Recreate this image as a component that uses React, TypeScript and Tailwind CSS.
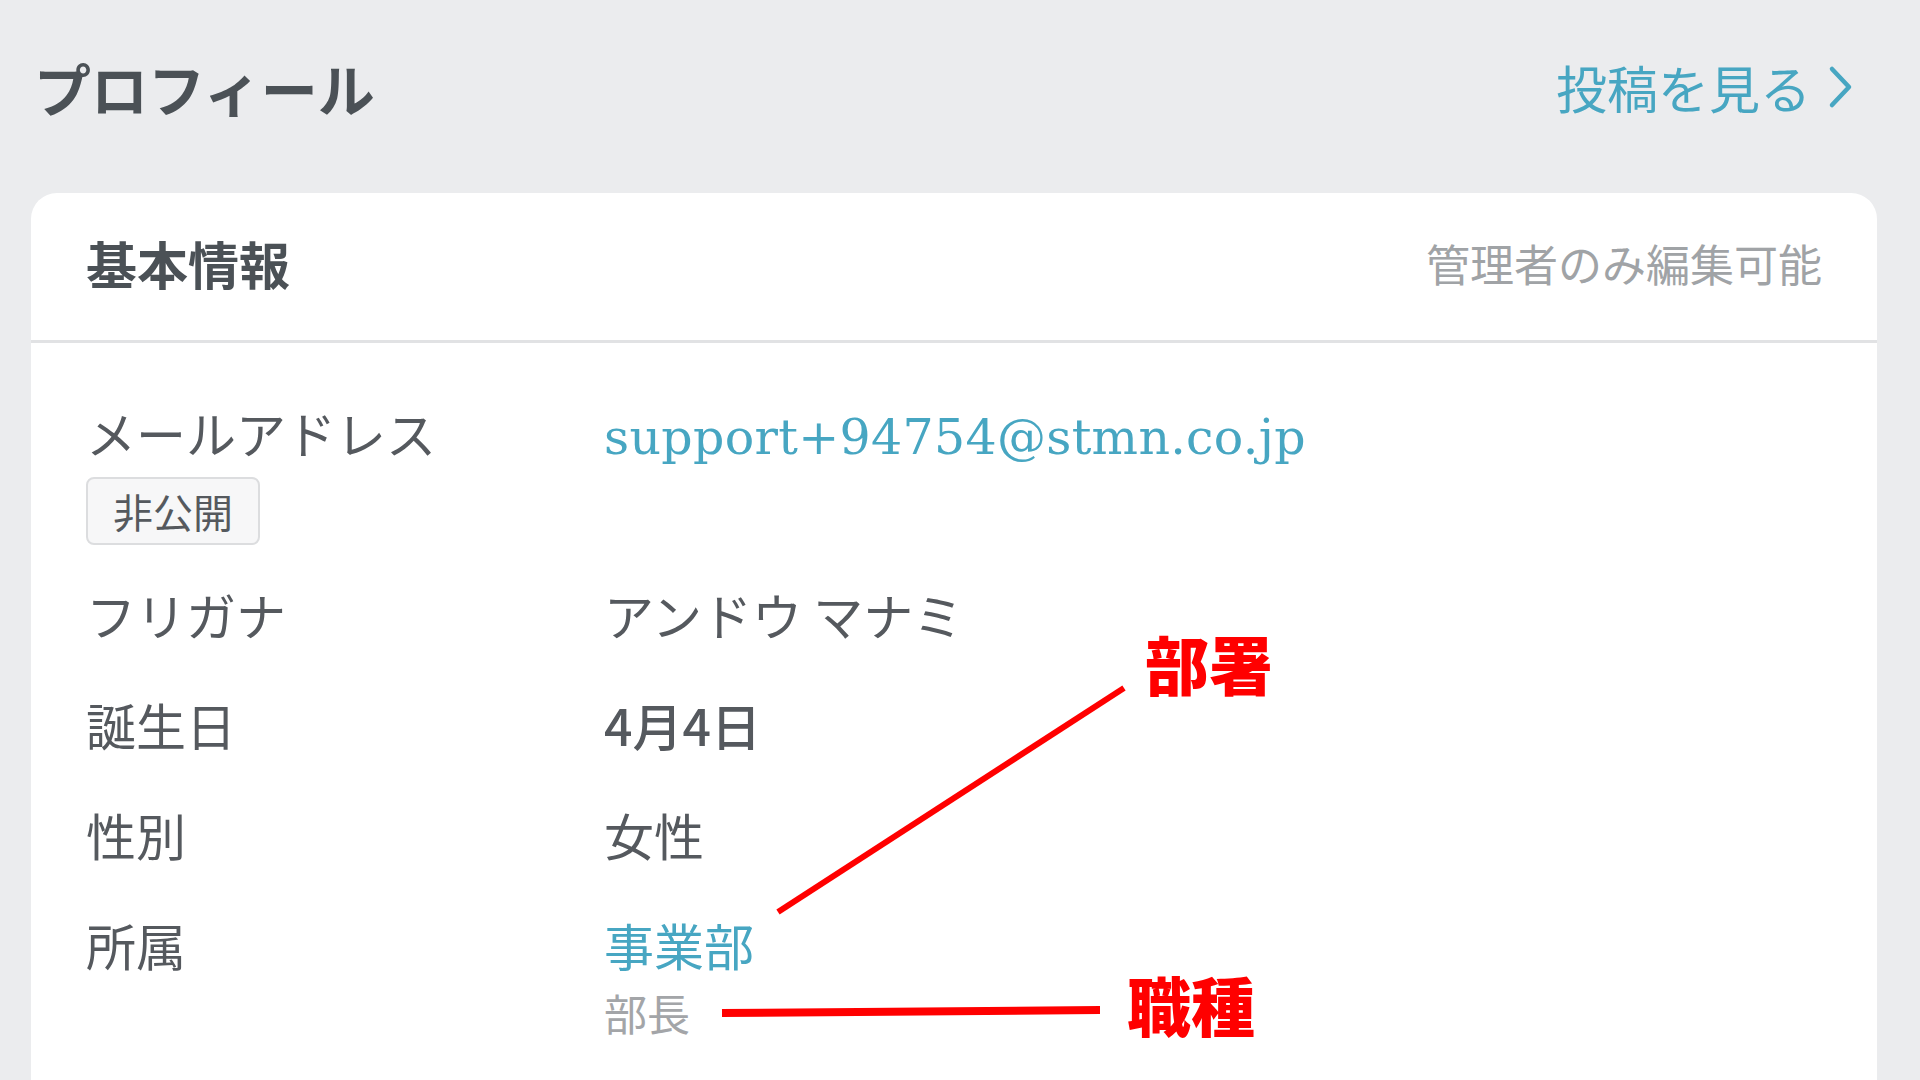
import { ReactNode } from "react";

const JP = "font-['Noto_Sans_CJK_JP','Noto_Sans',sans-serif]";

type Row = {
  label: string;
  badge?: string;
  value: ReactNode;
};

const ROWS: Row[] = [
  {
    label: "メールアドレス",
    badge: "非公開",
    value: (
      <span className="font-['DejaVu_Serif',serif] text-[49px] leading-[72px] tracking-[0.3px] text-[#47a6c2]">
        support+94754@stmn.co.jp
      </span>
    ),
  },
  { label: "フリガナ", value: <span>アンドウ マナミ</span> },
  { label: "誕生日", value: <span className="font-medium">4月4日</span> },
  { label: "性別", value: <span>女性</span> },
  {
    label: "所属",
    value: (
      <div className="flex flex-col">
        <span className="text-[#47a6c2]">事業部</span>
        <span className="text-[43px] leading-[64px] text-[#a3a5a8]">部長</span>
      </div>
    ),
  },
];

function Chevron() {
  return (
    <svg width="30" height="46" viewBox="0 0 30 46" fill="none" className="ml-[14px]">
      <polyline
        points="7,5 24,23 7,41"
        stroke="#47a6c2"
        strokeWidth="4.5"
        strokeLinecap="round"
        strokeLinejoin="round"
      />
    </svg>
  );
}

export default function App() {
  return (
    <div className={"relative h-[1080px] w-[1920px] overflow-hidden bg-[#ebecee] " + JP}>
      <header className="flex h-[184px] items-center justify-between pb-[10px] pl-[34px] pr-[65px]">
        <h1 className="text-[57px] font-bold leading-none text-[#4b5156]">プロフィール</h1>
        <a className="flex items-center text-[51px] leading-none text-[#47a6c2]">
          投稿を見る
          <Chevron />
        </a>
      </header>

      <section className="ml-[31px] mr-[43px] mt-[9px] h-[1000px] rounded-t-[26px] bg-white">
        <div className="flex h-[150px] items-center justify-between border-b-[3px] border-[#e1e2e4] px-[55px] pb-[8px]">
          <h2 className="text-[51px] font-bold leading-[72px] text-[#4b5156]">基本情報</h2>
          <span className="text-[44px] leading-[72px] text-[#a0a3a6]">管理者のみ編集可能</span>
        </div>

        <div className="flex flex-col gap-y-[38px] px-[55px] pt-[53px]">
          {ROWS.map((r) => (
            <div key={r.label} className="grid grid-cols-[518px_1fr] text-[50px] leading-[72px] text-[#55595e]">
              <div className="flex flex-col items-start">
                <span>{r.label}</span>
                {r.badge && (
                  <span className="-mb-[5px] mt-[9px] flex h-[68px] items-center rounded-[8px] border-2 border-[#dcdddf] bg-[#f7f7f8] px-[25px] text-[40px] leading-none text-[#55595e]">
                    {r.badge}
                  </span>
                )}
              </div>
              <div>{r.value}</div>
            </div>
          ))}
        </div>
      </section>

      {/* annotation overlay */}
      <svg className="pointer-events-none absolute left-0 top-0" width="1920" height="1080">
        <line x1="778" y1="912" x2="1124" y2="688" stroke="#ff0000" strokeWidth="6" />
        <line x1="722" y1="1013" x2="1100" y2="1010" stroke="#ff0000" strokeWidth="8" />
      </svg>
      <span className="absolute left-[1145px] top-[630px] text-[64px] font-black leading-none text-[#ff0000]">
        部署
      </span>
      <span className="absolute left-[1127px] top-[971px] text-[64px] font-black leading-none text-[#ff0000]">
        職種
      </span>
    </div>
  );
}
